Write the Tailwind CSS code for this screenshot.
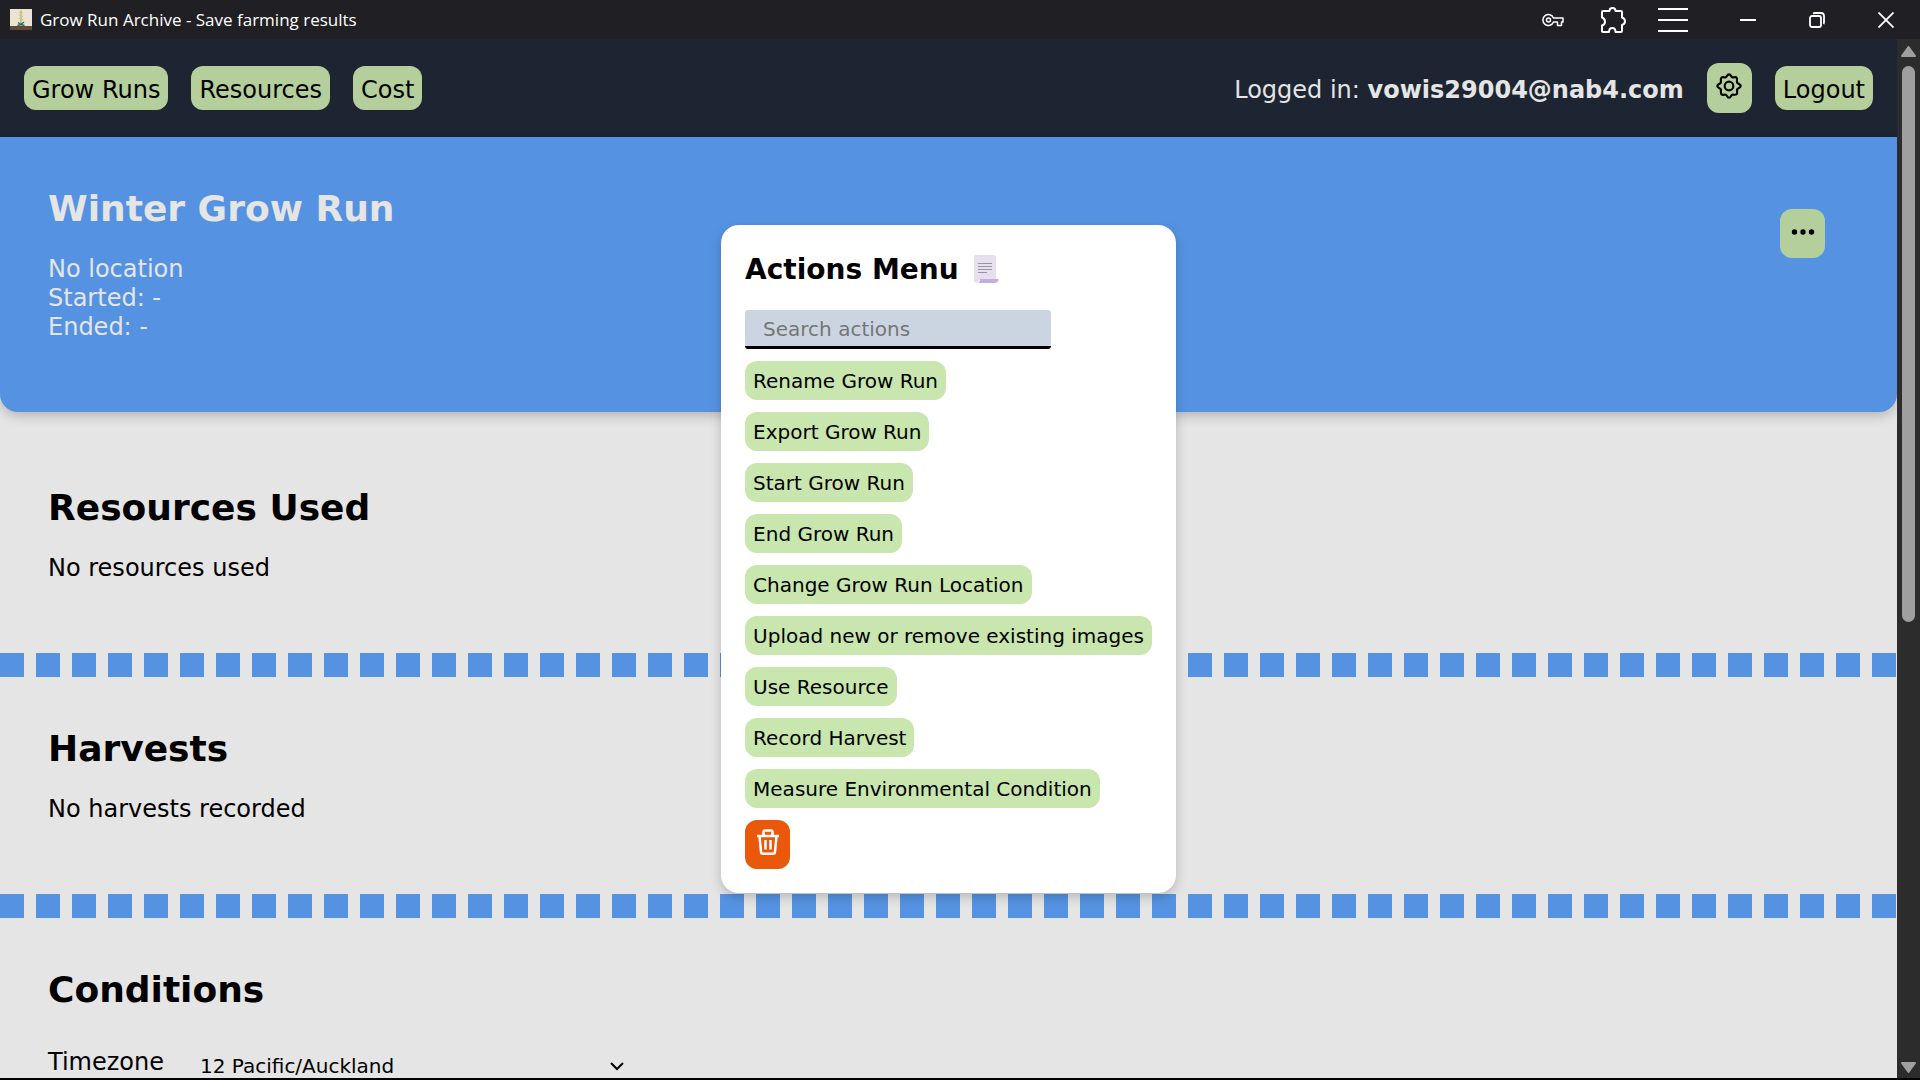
<!DOCTYPE html>
<html lang="en">
<head>
<meta charset="utf-8">
<title>Grow Run Archive - Save farming results</title>
<script src="https://cdn.jsdelivr.net/npm/@tailwindcss/browser@4"></script>
</head>
<body class="h-screen overflow-hidden flex flex-col bg-[#e5e5e5] text-black text-2xl/[29px] font-['DejaVu_Sans',Verdana,sans-serif]">

<!-- Window title bar -->
<div class="h-[39px] shrink-0 flex items-center justify-between bg-[#202024] text-white pl-[10px]">
  <div class="flex items-center gap-2">
    <svg class="w-[22px] h-[21px]" viewBox="0 0 22 21"><path fill="#ece4d2" d="M0 0h22v21H0z"/><path fill="#5f4a3c" d="M0 17h22v4H0z"/><path d="M11 2v14" stroke="#a3ab7c" stroke-width="1.200"/><path d="M11 1.500l1 2-1 2-1-2zM9 6l1.500 1M13 7l-1.500 1M8.800 9l1.700 1M13.300 10l-1.800 1" stroke="#d8c47a" stroke-width="1.200" fill="#b9b67a"/><path d="M8 13.500l3 2 3-2.500M7.500 16.500l3.500-1 3.500 1" stroke="#2f6a4c" stroke-width="1.400" fill="none"/></svg>
    <span class="text-[17px]/[24px] font-['Segoe_UI','Open_Sans',sans-serif]">Grow Run Archive - Save farming results</span>
  </div>
  <div class="flex items-center h-full">
    <button aria-label="Passwords" class="w-[60px] flex justify-center"><svg class="w-[22px] h-[14px]" viewBox="0 0 22 14" fill="none" stroke="currentColor" stroke-width="1.500" stroke-linejoin="round"><circle cx="6.500" cy="7" r="2"/><path d="M11.500 5H21v4h-1.500v3.500h-4V9h-4A5.500 5.500 0 1 1 11.500 5z"/></svg></button>
    <button aria-label="Extensions" class="w-[60px] flex justify-center"><svg class="w-[26px] h-[26px]" viewBox="0 0 26 26" fill="none" stroke="currentColor" stroke-width="2" stroke-linejoin="round"><path d="M3 4h6.500C9.500 0 15.500 0 15.500 4H21q1 0 1 1v5.500C26 11.500 26 17 22 18v6q0 1-1 1h-5.500C15.500 19.500 9 19.500 9 25H3q-1 0-1-1v-5.500C6 17.500 6 12 2 10.500V5q0-1 1-1z"/></svg></button>
    <button aria-label="Menu" class="w-[60px] mr-[10px] flex justify-center"><svg class="w-[30px] h-6" viewBox="0 0 30 24" stroke="currentColor" stroke-width="2"><path d="M0 1h30M0 12h30M0 23h30"/></svg></button>
    <button aria-label="Minimize" class="w-[69px] flex justify-center"><svg class="w-4 h-4" viewBox="0 0 16 16" stroke="currentColor" stroke-width="2"><path d="M0 8h16"/></svg></button>
    <button aria-label="Restore" class="w-[69px] flex justify-center"><svg class="w-4 h-4" viewBox="0 0 16 16" fill="none" stroke="currentColor" stroke-width="1.800"><rect x="1" y="4" width="11" height="11" rx="2"/><path d="M4 1.500C5 1 5.500 1 6 1h6a3 3 0 0 1 3 3v6c0 1 0 1.500-.5 2"/></svg></button>
    <button aria-label="Close" class="w-[69px] flex justify-center"><svg class="w-4 h-4" viewBox="0 0 16 16" stroke="currentColor" stroke-width="1.800"><path d="M.5.5l15 15M15.500.5l-15 15"/></svg></button>
  </div>
</div>

<div class="flex flex-1 min-h-0 border-b-2 border-black">
  <div class="relative flex-1 min-w-0 overflow-hidden">

    <header class="flex items-center justify-between h-[98px] px-6 bg-[#1e2532]">
      <nav class="flex gap-[23px]">
        <a href="#" class="h-11 px-2 pt-1 flex items-center rounded-xl bg-[#b4cf9c]">Grow Runs</a>
        <a href="#" class="h-11 px-2 pt-1 flex items-center rounded-xl bg-[#b4cf9c]">Resources</a>
        <a href="#" class="h-11 px-2 pt-1 flex items-center rounded-xl bg-[#b4cf9c]">Cost</a>
      </nav>
      <div class="flex items-center gap-[23px] text-[#e5e5e5]">
        <p class="pt-1">Logged in: <b>vowis29004@nab4.com</b></p>
        <button aria-label="Settings" class="w-[45px] h-[50px] pb-1 flex items-center justify-center rounded-xl bg-[#b4cf9c] text-black"><svg class="w-[26px] h-[26px]" viewBox="0 0 24 24" fill="none" stroke="currentColor" stroke-width="2" stroke-linejoin="round"><circle cx="12" cy="12" r="4"/><path d="M12 1.200C13.800 1.200 13.600 3.300 15 3.900S17.800 2.900 19 4.400 18.600 7.600 19.600 9 22.800 10.200 22.800 12 20.200 13.600 19.600 15 20.300 18.400 19 19.600 16.400 19.500 15 20.100 13.800 22.800 12 22.800 10.400 20.700 9 20.100 6.200 21 5 19.600 5 16.400 4.400 15 1.200 13.800 1.200 12 3.800 10.400 4.400 9 3.700 5.700 5 4.400 7.600 4.500 9 3.900 10.200 1.200 12 1.200z"/></svg></button>
        <button class="h-11 px-2 pt-1 rounded-xl bg-[#b4cf9c] text-black">Logout</button>
      </div>
    </header>

    <main>
      <section class="flex justify-between items-start mb-6 px-12 pt-[50px] pb-[70px] rounded-b-[18px] bg-[#5593e2] text-[#e5e5e5] shadow-[0_4px_12px_rgba(0,0,0,0.2)]">
        <div>
          <h1 class="mb-6 text-4xl/[44px] font-bold">Winter Grow Run</h1>
          <p>No location</p>
          <p>Started: -</p>
          <p>Ended: -</p>
        </div>
        <button aria-label="More actions" class="mt-[22px] mr-6 w-[45px] h-[49px] pb-1 flex items-center justify-center rounded-xl bg-[#b4cf9c] text-black"><svg class="w-6 h-6" viewBox="0 0 24 24" fill="currentColor"><circle cx="3.500" cy="12" r="2.700"/><circle cx="12" cy="12" r="2.700"/><circle cx="20.500" cy="12" r="2.700"/></svg></button>
      </section>

      <section class="px-12 pt-[50px] pb-[70px]">
        <h2 class="mb-6 text-4xl/[44px] font-bold">Resources Used</h2>
        <p>No resources used</p>
      </section>
      <div class="h-6 bg-[repeating-linear-gradient(90deg,#5593e2_0_24px,transparent_24px_36px)]"></div>

      <section class="px-12 pt-[50px] pb-[70px]">
        <h2 class="mb-6 text-4xl/[44px] font-bold">Harvests</h2>
        <p>No harvests recorded</p>
      </section>
      <div class="h-6 bg-[repeating-linear-gradient(90deg,#5593e2_0_24px,transparent_24px_36px)]"></div>

      <section class="px-12 pt-[50px] pb-[70px]">
        <h2 class="mb-6 text-4xl/[44px] font-bold">Conditions</h2>
        <div class="flex items-start gap-[18px]">
          <label for="timezone" class="pt-3">Timezone</label>
          <div class="relative">
            <select id="timezone" class="appearance-none w-[460px] h-[60px] pl-[18px] text-xl bg-transparent">
              <option>12 Pacific/Auckland</option>
            </select>
            <svg class="absolute right-[18px] top-[26px] w-[14px] h-[9px] pointer-events-none" viewBox="0 0 14 9" fill="none" stroke="black" stroke-width="2"><path d="M1 1l6 6 6-6"/></svg>
          </div>
        </div>
      </section>
    </main>

    <!-- Actions dialog, centred over the page -->
    <div class="absolute inset-0 flex items-center justify-center">
      <div role="dialog" aria-labelledby="actions-title" class="flex flex-col items-start gap-3 p-6 rounded-[18px] bg-white text-xl/[24px] shadow-[0_4px_12px_rgba(0,0,0,0.2)]">
        <div class="flex items-center gap-3.5 mb-3 pt-1 h-[37px]">
          <h2 id="actions-title" class="text-[28px]/[37px] font-bold">Actions Menu</h2>
          <svg class="w-[26px] h-7" viewBox="0 0 26 28"><path fill="#e6dfee" d="M1 1.500Q1 0 2.500 0H21q2 0 2 2v22H7l-3 4q-3 0-3-3z"/><path fill="#c3aede" d="M7 24h18.500q0 4-4 4H4q3 0 3-4z"/><path d="M5 8.500h14M5 11.500h14M5 14.500h14M5 17.500h9" stroke="#9a949f"/></svg>
        </div>
        <input type="search" aria-label="Search actions" placeholder="Search actions" class="w-[306px] h-[39px] px-[18px] pt-0.5 rounded-[3px] border-b-[3px] border-black bg-[#cbd5e1] placeholder:text-[#757575]">
        <button class="h-[39px] px-2 pt-0.5 rounded-xl bg-[#c8e6ad]">Rename Grow Run</button>
        <button class="h-[39px] px-2 pt-0.5 rounded-xl bg-[#c8e6ad]">Export Grow Run</button>
        <button class="h-[39px] px-2 pt-0.5 rounded-xl bg-[#c8e6ad]">Start Grow Run</button>
        <button class="h-[39px] px-2 pt-0.5 rounded-xl bg-[#c8e6ad]">End Grow Run</button>
        <button class="h-[39px] px-2 pt-0.5 rounded-xl bg-[#c8e6ad]">Change Grow Run Location</button>
        <button class="h-[39px] px-2 pt-0.5 rounded-xl bg-[#c8e6ad]">Upload new or remove existing images</button>
        <button class="h-[39px] px-2 pt-0.5 rounded-xl bg-[#c8e6ad]">Use Resource</button>
        <button class="h-[39px] px-2 pt-0.5 rounded-xl bg-[#c8e6ad]">Record Harvest</button>
        <button class="h-[39px] px-2 pt-0.5 rounded-xl bg-[#c8e6ad]">Measure Environmental Condition</button>
        <button aria-label="Delete grow run" class="w-[45px] h-[49px] pb-1 flex items-center justify-center rounded-xl bg-[#ea580c] text-white"><svg class="w-6 h-[26px]" viewBox="0 0 24 26" fill="none" stroke="currentColor" stroke-width="2.500" stroke-linejoin="round"><path d="M1 7h22M7.500 7V3q0-1.500 1.500-1.500h6q1.500 0 1.500 1.500v4M3.500 7L5 22.800q.2 1.900 2 1.900h10q1.800 0 2-1.900L20.500 7"/><path d="M9.500 11v9.500M14.500 11v9.500"/></svg></button>
      </div>
    </div>
  </div>

  <!-- Scroll bar -->
  <div class="w-[23px] shrink-0 flex flex-col items-center pt-[7px] pb-[5px] bg-[#2c2c2c]">
    <svg class="w-[15px] h-[11px]" viewBox="0 0 15 11"><path fill="#9f9f9f" stroke="#9f9f9f" stroke-width="2" stroke-linejoin="round" d="M7.500 1L14 10H1z"/></svg>
    <div class="mt-[9px] w-[13px] h-[556px] rounded-full bg-[#9f9f9f]"></div>
    <svg class="mt-auto w-[15px] h-[11px]" viewBox="0 0 15 11"><path fill="#9f9f9f" stroke="#9f9f9f" stroke-width="2" stroke-linejoin="round" d="M7.500 10L14 1H1z"/></svg>
  </div>
</div>
</body>
</html>
